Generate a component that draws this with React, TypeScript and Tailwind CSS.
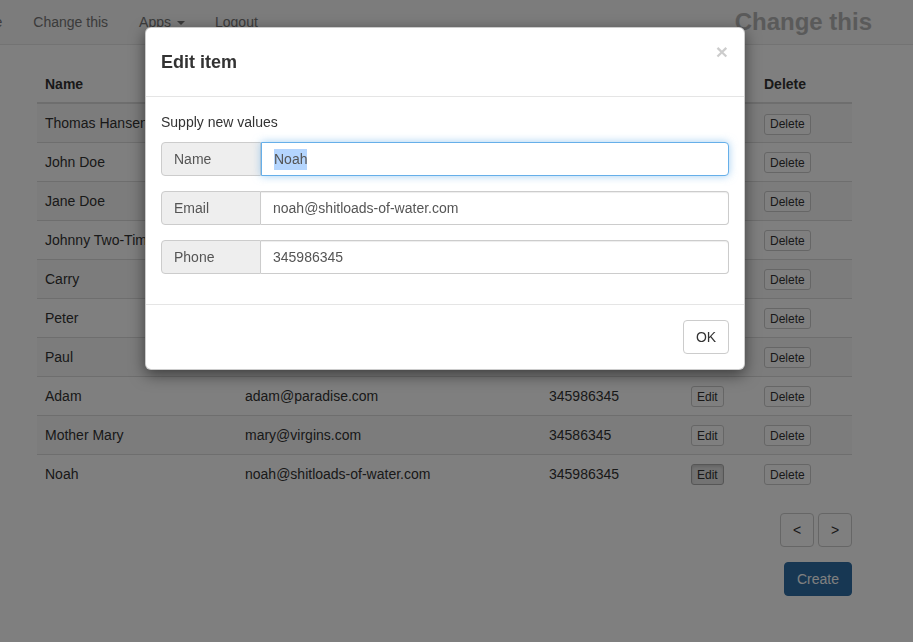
import React from 'react';

type Person = { name: string; email: string; phone: string };

const people: Person[] = [
  { name: 'Thomas Hansen', email: 'thomas@gaiasoul.com', phone: '98765432' },
  { name: 'John Doe', email: 'john@doe.com', phone: '12345678' },
  { name: 'Jane Doe', email: 'jane@doe.com', phone: '12345678' },
  { name: 'Johnny Two-Times', email: 'johnny@two-times.com', phone: '22334455' },
  { name: 'Carry', email: 'carry@on.com', phone: '34598634' },
  { name: 'Peter', email: 'peter@rock.com', phone: '34598345' },
  { name: 'Paul', email: 'paul@letters.com', phone: '34598345' },
  { name: 'Adam', email: 'adam@paradise.com', phone: '345986345' },
  { name: 'Mother Mary', email: 'mary@virgins.com', phone: '34586345' },
  { name: 'Noah', email: 'noah@shitloads-of-water.com', phone: '345986345' },
];

const font = { fontFamily: '"Liberation Sans", Arial, sans-serif' };

const SmallButton = ({ label, active }: { label: string; active?: boolean }) => (
  <button
    className={
      'h-[21px] px-[5px] text-[12px] leading-[18px] rounded-[3px] border text-[#333] ' +
      (active ? 'bg-[#e6e6e6] border-[#adadad] shadow-[inset_0_2px_3px_rgba(0,0,0,0.125)]' : 'bg-white border-[#ccc]')
    }
  >
    {label}
  </button>
);

const Field = ({ label, value, focused }: { label: string; value: string; focused?: boolean }) => (
  <div className="flex h-[34px] mb-[15px]">
    <div className="w-[100px] shrink-0 flex items-center px-3 bg-[#eee] border border-[#ccc] rounded-l-[4px] text-[#555]">
      {label}
    </div>
    <div
      className={
        'flex-1 flex items-center px-3 border rounded-r-[4px] text-[#555] bg-white ' +
        (focused
          ? 'border-[#66afe9] shadow-[0_0_8px_rgba(102,175,233,0.6)]'
          : 'border-[#ccc] border-l-0 shadow-[inset_0_1px_1px_rgba(0,0,0,0.075)]')
      }
    >
      {focused ? <span className="bg-[#b4d5fe]">{value}</span> : value}
    </div>
  </div>
);

export default function App() {
  return (
    <div className="relative min-h-[642px] bg-white text-[14px] text-[#333] overflow-hidden" style={font}>
      {/* navbar */}
      <div className="h-[45px] bg-[#f8f8f8] border-b border-[#e7e7e7] flex items-center text-[#777] mb-[21px]">
        <span className="ml-[-35px]">Home</span>
        <span className="ml-[31px]">Change this</span>
        <span className="ml-[31px] flex items-center">
          Apps
          <span className="ml-[6px] mt-[2px] border-x-[4px] border-x-transparent border-t-[4px] border-t-[#777]" />
        </span>
        <span className="ml-[30px]">Logout</span>
        <span className="ml-auto mr-[41px] text-[24px] font-bold text-[#b5b5b5]">Change this</span>
      </div>

      {/* table */}
      <div className="ml-[37px] w-[815px]">
        <table className="w-full border-collapse mb-5">
          <thead>
            <tr className="border-b-2 border-[#ddd] text-left">
              <th className="w-[200px] px-2 py-2 leading-5">Name</th>
              <th className="w-[304px] px-2 py-2 leading-5">Email</th>
              <th className="w-[142px] px-2 py-2 leading-5">Phone</th>
              <th className="w-[73px] px-2 py-2 leading-5">Edit</th>
              <th className="px-2 py-2 leading-5">Delete</th>
            </tr>
          </thead>
          <tbody>
            {people.map((p, i) => (
              <tr key={p.name} className={'border-t border-[#ddd] ' + (i % 2 === 0 ? 'bg-[#f9f9f9]' : '')}>
                <td className="px-2 pt-[9px] leading-5 align-top h-[39px]">{p.name}</td>
                <td className="px-2 pt-[9px] leading-5 align-top">{p.email}</td>
                <td className="px-2 pt-[9px] leading-5 align-top">{p.phone}</td>
                <td className="px-2 pt-[9px] align-top">
                  <SmallButton label="Edit" active={i === people.length - 1} />
                </td>
                <td className="px-2 pt-[9px] align-top">
                  <SmallButton label="Delete" />
                </td>
              </tr>
            ))}
          </tbody>
        </table>

        <div className="flex justify-end gap-1">
          <button className="w-[34px] h-[34px] border border-[#ccc] rounded-[4px] bg-white text-[#333]">&lt;</button>
          <button className="w-[34px] h-[34px] border border-[#ccc] rounded-[4px] bg-white text-[#333]">&gt;</button>
        </div>
        <div className="flex justify-end mt-[15px]">
          <button className="h-[34px] px-3 rounded-[4px] bg-[#2f6fa7] border border-[#2e6da4] text-white">Create</button>
        </div>
      </div>

      {/* backdrop */}
      <div className="fixed inset-0 bg-black/50" />

      {/* modal */}
      <div className="absolute left-[145px] top-[27px] w-[600px] bg-white rounded-[6px] border border-black/20 shadow-[0_5px_15px_rgba(0,0,0,0.5)]">
        <div className="h-[69px] px-[15px] flex items-center border-b border-[#e5e5e5] relative">
          <h4 className="text-[18px] font-bold text-[#333] mt-[1px]">Edit item</h4>
          <span className="absolute right-[16px] top-[13px] text-[21px] font-bold text-black/20 leading-none">×</span>
        </div>
        <div className="p-[15px]">
          <p className="leading-5 mb-[10px]">Supply new values</p>
          <Field label="Name" value="Noah" focused />
          <Field label="Email" value="noah@shitloads-of-water.com" />
          <Field label="Phone" value="345986345" />
        </div>
        <div className="border-t border-[#e5e5e5] p-[15px] flex justify-end">
          <button className="h-[34px] w-[46px] rounded-[4px] border border-[#ccc] bg-white text-[#333]">OK</button>
        </div>
      </div>
    </div>
  );
}
